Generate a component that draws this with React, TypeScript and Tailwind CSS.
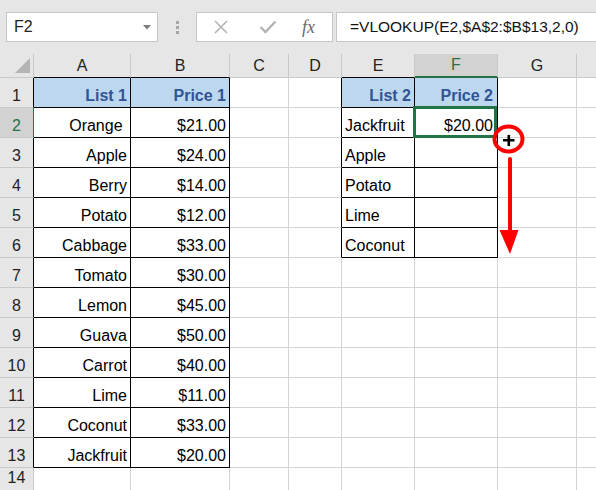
import React from "react";

const A = ["List 1", "Orange ", "Apple", "Berry", "Potato", "Cabbage", "Tomato", "Lemon", "Guava", "Carrot", "Lime", "Coconut", "Jackfruit"];
const B = ["Price 1", "$21.00", "$24.00", "$14.00", "$12.00", "$33.00", "$30.00", "$45.00", "$50.00", "$40.00", "$11.00", "$33.00", "$20.00"];
const E = ["List 2", "Jackfruit", "Apple", "Potato", "Lime", "Coconut"];
const F = ["Price 2", "$20.00"];
const LETTERS = ["A", "B", "C", "D", "E", "F", "G", ""];

const base = "box-border flex items-end pb-[2px] text-[16px] leading-[18px] whitespace-pre overflow-hidden";
const grid = "border-r border-b border-r-[#d4d4d4] border-b-[#d4d4d4]";
const tbl = "border-r border-b border-r-black border-b-black";
const head = "bg-[#bdd7ee] font-bold text-[#305496]";

function HeaderRow() {
  return (
    <>
      <div className="box-border relative bg-[#e6e6e6] border-r border-b border-r-[#c8c8c8] border-b-[#c8c8c8]">
        <svg className="absolute left-[15px] top-[4px]" width="15" height="15" viewBox="0 0 15 15">
          <polygon points="15,0 15,15 0,15" fill="#b4b4b4" />
        </svg>
      </div>
      {LETTERS.map((l, i) => {
        const sel = l === "F";
        const inTable = l === "A" || l === "B" || l === "E";
        let cls = "box-border flex items-center justify-center text-[16px] border-r border-r-[#c8c8c8] ";
        if (l === "") cls = "box-border ";
        if (sel) cls += "bg-[#d2d2d2] text-[#217346] border-b-2 border-b-[#217346]";
        else if (inTable) cls += "bg-[#e6e6e6] text-[#222] border-b border-b-black";
        else cls += "bg-[#e6e6e6] text-[#222] border-b border-b-[#c8c8c8]";
        return (
          <div key={i} className={cls}>
            {l}
          </div>
        );
      })}
    </>
  );
}

function Row({ r }: { r: number }) {
  const cells: React.ReactNode[] = [];
  let rh =
    "box-border flex items-end text-[16px] leading-[18px] whitespace-pre overflow-hidden justify-center border-b border-b-[#c8c8c8] border-r ";
  rh += r === 14 ? "pb-[10px] " : "pb-[2px] ";
  if (r === 2) rh += "bg-[#d2d2d2] text-[#217346] border-r-[#217346]";
  else if (r <= 13) rh += "bg-[#e6e6e6] text-[#222] border-r-black";
  else rh += "bg-[#e6e6e6] text-[#222] border-r-[#c8c8c8]";
  cells.push(
    <div key="h" className={rh}>
      {r}
    </div>
  );
  if (r <= 13) {
    const h = r === 1;
    cells.push(
      <div key="a" className={base + " justify-end pr-[3px] " + tbl + (h ? " " + head : " bg-white text-black")}>
        {A[r - 1]}
      </div>
    );
    cells.push(
      <div key="b" className={base + " justify-end pr-[3px] " + tbl + (h ? " " + head : " bg-white text-black")}>
        {B[r - 1]}
      </div>
    );
  } else {
    cells.push(<div key="a" className={base + " bg-white " + grid} />);
    cells.push(<div key="b" className={base + " bg-white " + grid} />);
  }
  cells.push(<div key="c" className={base + " bg-white " + grid} />);
  cells.push(
    <div
      key="d"
      className={
        base +
        " bg-white border-r border-b border-b-[#d4d4d4] " +
        (r <= 6 ? "border-r-black" : "border-r-[#d4d4d4]")
      }
    />
  );
  if (r <= 6) {
    const h = r === 1;
    cells.push(
      <div
        key="e"
        className={base + " " + tbl + (h ? " justify-end pr-[3px] " + head : " justify-start pl-[3px] bg-white text-black")}
      >
        {E[r - 1]}
      </div>
    );
    cells.push(
      <div key="f" className={base + " justify-end pr-[4px] " + tbl + (h ? " " + head : " bg-white text-black")}>
        {F[r - 1] ?? ""}
      </div>
    );
  } else {
    cells.push(<div key="e" className={base + " bg-white " + grid} />);
    cells.push(<div key="f" className={base + " bg-white " + grid} />);
  }
  cells.push(<div key="g" className={base + " bg-white " + grid} />);
  cells.push(<div key="hh" className={base + " bg-white border-b border-b-[#d4d4d4]"} />);
  return <>{cells}</>;
}

export default function App() {
  const rows = Array.from({ length: 14 }, (_, i) => i + 1);
  return (
    <div
      className="relative w-[596px] h-[490px] overflow-hidden bg-white text-black"
      style={{ fontFamily: '"Liberation Sans", Arial, sans-serif' }}
    >
      {/* toolbar */}
      <div className="h-[54px] bg-[#e6e6e6] flex items-start pt-[12px]">
        <div className="ml-[6px] w-[152px] h-[30px] box-border bg-white border border-[#c6c6c6] flex items-center pl-[7px] pr-[6px] text-[16px] text-[#222]">
          <span className="flex-1">F2</span>
          <svg width="8" height="5" viewBox="0 0 8 5">
            <polygon points="0,0 8,0 4,4.5" fill="#7a7a7a" />
          </svg>
        </div>
        <div className="w-[38px] h-[30px] flex flex-col items-center justify-center gap-[2px]">
          <div className="w-[3px] h-[3px] bg-[#a6a6a6]" />
          <div className="w-[3px] h-[3px] bg-[#a6a6a6]" />
          <div className="w-[3px] h-[3px] bg-[#a6a6a6]" />
        </div>
        <div className="w-[137px] h-[30px] box-border bg-white border border-[#c6c6c6] flex items-center">
          <div className="w-[45px] flex justify-center pl-[2px]">
            <svg width="16" height="16" viewBox="0 0 16 16">
              <path d="M2 2 L14 14 M14 2 L2 14" stroke="#b3b3b3" strokeWidth="1.6" fill="none" />
            </svg>
          </div>
          <div className="w-[45px] flex justify-center pl-[6px]">
            <svg width="18" height="14" viewBox="0 0 18 14">
              <path d="M1.5 7 L6.5 12 L16.5 1.5" stroke="#b3b3b3" strokeWidth="2.4" fill="none" />
            </svg>
          </div>
          <div
            className="flex-1 flex justify-center pr-[2px] text-[18px] italic text-[#6b6b6b] leading-none"
            style={{ fontFamily: '"Liberation Serif", "Times New Roman", serif' }}
          >
            fx
          </div>
        </div>
        <div className="ml-[3px] flex-1 h-[30px] box-border bg-white border border-r-0 border-[#c6c6c6] flex items-center pl-[13px] text-[15.5px] text-[#111] whitespace-nowrap">
          =VLOOKUP(E2,$A$2:$B$13,2,0)
        </div>
      </div>

      {/* sheet */}
      <div className="grid grid-cols-[34px_97px_99px_59px_53px_73px_83px_79px_1fr] grid-rows-[24px_repeat(14,30px)]">
        <HeaderRow />
        {rows.map((r) => (
          <Row key={r} r={r} />
        ))}
      </div>

      {/* selection */}
      <div className="absolute left-[413px] top-[106px] w-[84px] h-[32px] box-border border-[3px] border-[#217346]" />

      {/* annotation */}
      <svg className="absolute left-0 top-0 pointer-events-none" width="596" height="490" viewBox="0 0 596 490">
        <ellipse cx="508.5" cy="139" rx="14" ry="12.5" fill="none" stroke="#ff0000" strokeWidth="4" />
        <path d="M503 140.3 L514.5 140.3 M508.8 135 L508.8 146" stroke="#000" strokeWidth="2.6" fill="none" />
        <line x1="510" y1="159" x2="510" y2="236" stroke="#ff0000" strokeWidth="4" strokeLinecap="round" />
        <polygon points="499.5,230 518.5,230 510,254" fill="#ff0000" />
      </svg>
    </div>
  );
}
